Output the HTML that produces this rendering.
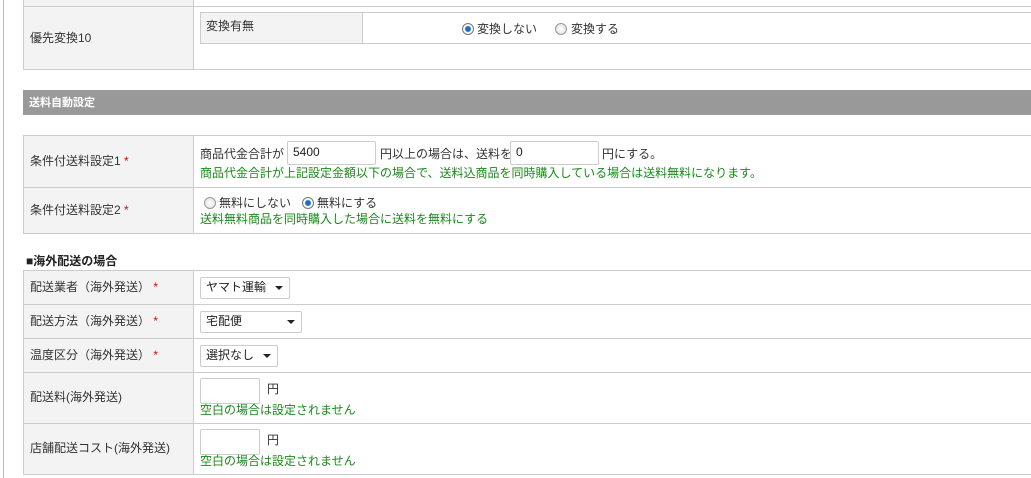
<!DOCTYPE html>
<html><head><meta charset="utf-8"><style>
body{margin:0;width:1031px;height:478px;overflow:hidden;background:#fff;position:relative;font-family:"Liberation Sans","Noto Sans CJK JP",sans-serif;font-size:12px;color:#333}
.a{position:absolute}
.lab{position:absolute;left:23px;width:171px;background:#f3f3f3;border:1px solid #ccc;border-right:1px solid #ccc;box-sizing:border-box}
.val{position:absolute;left:194px;right:-2px;border:1px solid #ccc;border-left:none;box-sizing:border-box;background:#fff}
.t{position:absolute;white-space:nowrap;line-height:14px}
.g{color:#1a8a1a}
.r{color:#e00}
.inp{position:absolute;border:1px solid #ccc;border-radius:2px;background:#fff;box-sizing:border-box;padding-left:5px;line-height:21px;font-size:12px;color:#222}
.sel{position:absolute;border:1px solid #ccc;border-radius:2px;background:#fff;box-sizing:border-box;padding-left:5px;line-height:19px;color:#222}
.sel:after{content:"";position:absolute;right:6px;top:8px;border-left:4px solid transparent;border-right:4px solid transparent;border-top:4px solid #222}
.rad{position:absolute;width:12px;height:12px;border-radius:50%;border:1px solid #999;background:radial-gradient(#fff,#ddd);box-sizing:border-box}
.rad.on{background:radial-gradient(circle,#1b5ea8 0,#2a77c4 2.5px,#fff 3.5px,#eee 6px);border-color:#777}
</style></head><body>
<div class="a" style="left:3px;top:0;width:1px;height:478px;background:#bbb"></div>
<div class="lab" style="top:-2px;height:9px"></div><div class="val" style="top:-2px;height:9px"></div>
<div class="lab" style="top:6px;height:64px"></div><div class="val" style="top:6px;height:64px"></div>
<div class="t" style="left:30px;top:31px">優先変換10</div>
<div class="a" style="left:200px;top:12px;width:163px;height:32px;background:#f3f3f3;border:1px solid #ccc;box-sizing:border-box"></div>
<div class="a" style="left:362px;top:12px;width:680px;height:32px;border:1px solid #ccc;border-left:none;box-sizing:border-box"></div>
<div class="t" style="left:206px;top:19px">変換有無</div>
<div class="rad on" style="left:462px;top:23px"></div><div class="t" style="left:477px;top:22px">変換しない</div>
<div class="rad" style="left:555px;top:23px"></div><div class="t" style="left:571px;top:22px">変換する</div>
<div class="a" style="left:23px;top:90px;width:1008px;height:25px;background:#999"></div>
<div class="t" style="left:29px;top:96px;color:#fff;font-weight:bold;font-size:11px">送料自動設定</div>
<div class="lab" style="top:135px;height:53px"></div><div class="val" style="top:135px;height:53px"></div>
<div class="t" style="left:30px;top:154px">条件付送料設定1 <span class="r">*</span></div>
<div class="t" style="left:200px;top:147px">商品代金合計が</div>
<div class="inp" style="left:287px;top:141px;width:89px;height:24px">5400</div>
<div class="t" style="left:380px;top:147px">円以上の場合は、送料を</div>
<div class="inp" style="left:510px;top:141px;width:89px;height:24px">0</div>
<div class="t" style="left:602px;top:147px">円にする。</div>
<div class="t g" style="left:200px;top:166px">商品代金合計が上記設定金額以下の場合で、送料込商品を同時購入している場合は送料無料になります。</div>
<div class="lab" style="top:187px;height:47px"></div><div class="val" style="top:187px;height:47px"></div>
<div class="t" style="left:30px;top:203px">条件付送料設定2 <span class="r">*</span></div>
<div class="rad" style="left:204px;top:197px"></div><div class="t" style="left:219px;top:196px">無料にしない</div>
<div class="rad on" style="left:302px;top:197px"></div><div class="t" style="left:317px;top:196px">無料にする</div>
<div class="t g" style="left:200px;top:212px">送料無料商品を同時購入した場合に送料を無料にする</div>
<div class="t" style="left:26px;top:254px;font-weight:bold;color:#222">■海外配送の場合</div>
<div class="lab" style="top:270px;height:35px"></div><div class="val" style="top:270px;height:35px"></div>
<div class="t" style="left:30px;top:280px">配送業者（海外発送） <span class="r">*</span></div>
<div class="sel" style="left:200px;top:277px;width:90px;height:22px">ヤマト運輸</div>
<div class="lab" style="top:304px;height:35px"></div><div class="val" style="top:304px;height:35px"></div>
<div class="t" style="left:30px;top:314px">配送方法（海外発送） <span class="r">*</span></div>
<div class="sel" style="left:200px;top:311px;width:102px;height:22px">宅配便</div>
<div class="lab" style="top:338px;height:35px"></div><div class="val" style="top:338px;height:35px"></div>
<div class="t" style="left:30px;top:348px">温度区分（海外発送） <span class="r">*</span></div>
<div class="sel" style="left:200px;top:345px;width:78px;height:22px">選択なし</div>
<div class="lab" style="top:372px;height:52px"></div><div class="val" style="top:372px;height:52px"></div>
<div class="t" style="left:30px;top:390px">配送料(海外発送)</div>
<div class="inp" style="left:200px;top:378px;width:60px;height:26px"></div>
<div class="t" style="left:267px;top:382px">円</div>
<div class="t g" style="left:200px;top:403px">空白の場合は設定されません</div>
<div class="lab" style="top:423px;height:52px"></div><div class="val" style="top:423px;height:52px"></div>
<div class="t" style="left:30px;top:441px">店舗配送コスト(海外発送)</div>
<div class="inp" style="left:200px;top:429px;width:60px;height:26px"></div>
<div class="t" style="left:267px;top:433px">円</div>
<div class="t g" style="left:200px;top:454px">空白の場合は設定されません</div>
</body></html>
